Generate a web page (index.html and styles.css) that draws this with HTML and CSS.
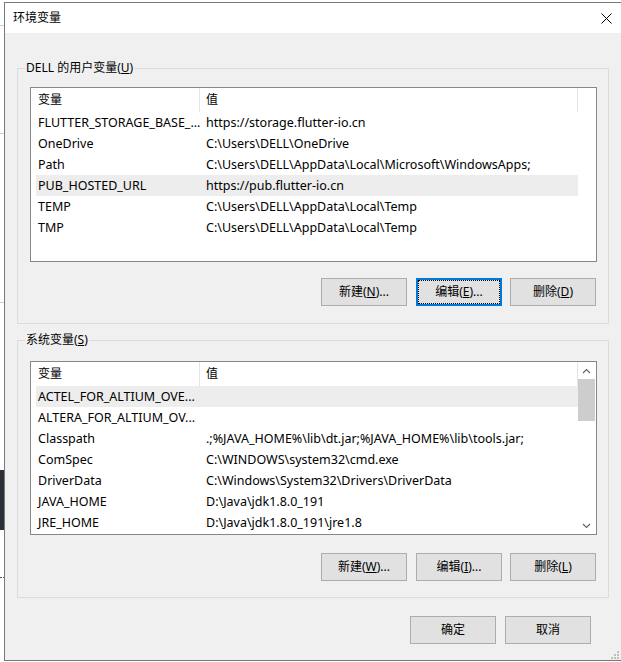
FILE: index.html
```html
<!DOCTYPE html>
<html lang="zh-CN">
<head>
<meta charset="utf-8">
<title>环境变量</title>
<link rel="stylesheet" href="styles.css">
</head>
<body>
<div class="strip">
  <div class="strip-line l1"></div>
  <div class="strip-line l2"></div>
  <div class="strip-line l3"></div>
  <div class="strip-dark"></div>
  <div class="strip-dots"></div>
</div>
<div class="window">
  <div class="titlebar">
    <span class="title">环境变量</span>
    <svg class="close" width="11" height="11" viewBox="0 0 11 11"><path d="M0.5 0.5 L10.5 10.5 M10.5 0.5 L0.5 10.5" stroke="#000" stroke-width="1" fill="none"/></svg>
  </div>
  <div class="body">
    <fieldset class="group group-user">
      <legend>DELL 的用户变量(<u>U</u>)</legend>
      <div class="group-inner">
        <div class="list">
          <div class="list-main">
            <div class="list-head"><div class="h1">变量</div><div class="h2">值</div></div>
            <div class="row"><span class="c1">FLUTTER_STORAGE_BASE_...</span><span class="c2">https://storage.flutter-io.cn</span></div>
            <div class="row"><span class="c1">OneDrive</span><span class="c2">C:\Users\DELL\OneDrive</span></div>
            <div class="row"><span class="c1">Path</span><span class="c2">C:\Users\DELL\AppData\Local\Microsoft\WindowsApps;</span></div>
            <div class="row sel"><span class="c1">PUB_HOSTED_URL</span><span class="c2">https://pub.flutter-io.cn</span></div>
            <div class="row"><span class="c1">TEMP</span><span class="c2">C:\Users\DELL\AppData\Local\Temp</span></div>
            <div class="row"><span class="c1">TMP</span><span class="c2">C:\Users\DELL\AppData\Local\Temp</span></div>
          </div>
        </div>
        <div class="btns btns-user">
          <div class="btn">新建(<u>N</u>)...</div>
          <div class="btn default">编辑(<u>E</u>)...</div>
          <div class="btn">删除(<u>D</u>)</div>
        </div>
      </div>
    </fieldset>
    <fieldset class="group group-sys">
      <legend>系统变量(<u>S</u>)</legend>
      <div class="group-inner">
        <div class="list">
          <div class="list-main">
            <div class="list-head"><div class="h1">变量</div><div class="h2">值</div></div>
            <div class="row sel"><span class="c1">ACTEL_FOR_ALTIUM_OVE...</span><span class="c2"></span></div>
            <div class="row"><span class="c1">ALTERA_FOR_ALTIUM_OV...</span><span class="c2"></span></div>
            <div class="row"><span class="c1">Classpath</span><span class="c2">.;%JAVA_HOME%\lib\dt.jar;%JAVA_HOME%\lib\tools.jar;</span></div>
            <div class="row"><span class="c1">ComSpec</span><span class="c2">C:\WINDOWS\system32\cmd.exe</span></div>
            <div class="row"><span class="c1">DriverData</span><span class="c2">C:\Windows\System32\Drivers\DriverData</span></div>
            <div class="row"><span class="c1">JAVA_HOME</span><span class="c2">D:\Java\jdk1.8.0_191</span></div>
            <div class="row"><span class="c1">JRE_HOME</span><span class="c2">D:\Java\jdk1.8.0_191\jre1.8</span></div>
          </div>
          <div class="scrollbar">
            <div class="arrow"><svg width="9" height="6" viewBox="0 0 9 6"><path d="M1 5 L4.5 1.5 L8 5" stroke="#606060" stroke-width="1.1" fill="none"/></svg></div>
            <div class="thumb"></div>
            <div class="track"></div>
            <div class="arrow"><svg width="9" height="6" viewBox="0 0 9 6"><path d="M1 1 L4.5 4.5 L8 1" stroke="#606060" stroke-width="1.1" fill="none"/></svg></div>
          </div>
        </div>
        <div class="btns btns-sys">
          <div class="btn">新建(<u>W</u>)...</div>
          <div class="btn">编辑(<u>I</u>)...</div>
          <div class="btn">删除(<u>L</u>)</div>
        </div>
      </div>
    </fieldset>
    <div class="footer">
      <div class="btn">确定</div>
      <div class="btn">取消</div>
    </div>
  </div>
  <svg class="grip" width="9" height="9" viewBox="0 0 9 9">
    <rect x="7" y="1" width="2" height="2" fill="#bfbfbf"/>
    <rect x="4" y="4" width="2" height="2" fill="#bfbfbf"/>
    <rect x="7" y="4" width="2" height="2" fill="#bfbfbf"/>
    <rect x="1" y="7" width="2" height="2" fill="#bfbfbf"/>
    <rect x="4" y="7" width="2" height="2" fill="#bfbfbf"/>
    <rect x="7" y="7" width="2" height="2" fill="#bfbfbf"/>
  </svg>
</div>
</body>
</html>
```
FILE: styles.css
```css
* { box-sizing: border-box; }
html, body { margin: 0; padding: 0; }
body {
  width: 621px;
  height: 662px;
  overflow: hidden;
  display: flex;
  background: #ffffff;
  font-family: "Noto Sans", "Noto Sans CJK SC", sans-serif;
  font-size: 12px;
  color: #000;
}

/* strip of the window behind, at the left edge */
.strip { width: 4px; flex: none; display: flex; flex-direction: column; }
.strip-line { height: 1px; background: #cfcfcf; }
.l1 { margin-top: 25px; }
.l2 { margin-top: 107px; }
.l3 { margin-top: 168px; }
.strip-dark { margin-top: 167px; height: 60px; background: #2b2f36; }
.strip-dots { margin-top: 47px; height: 1px; border-top: 1px dotted #555; }

.window {
  flex: 1;
  margin-top: 2px;
  height: 659px;
  border: 1px solid #787878;
  border-right: none;
  background: #f0f0f0;
  display: flex;
  flex-direction: column;
  position: relative;
}
.titlebar {
  height: 30px;
  flex: none;
  background: #fff;
  display: flex;
  align-items: center;
  justify-content: space-between;
  padding: 0 9px 0 8px;
}
.title { line-height: 16px; }
.close { display: block; }

.body { flex: 1; padding: 0 12px; display: flex; flex-direction: column; }

.group {
  margin: 0;
  padding: 0;
  border: 1px solid #dcdcdc;
  min-width: 0;
}
.group legend {
  margin-left: 7px;
  padding: 0 1px;
  line-height: 16px;
  height: 16px;
}
.group-user { margin-top: 27px; }
.group-sys { margin-top: 8px; }
.group-inner { padding: 0 11px 17px 12px; }
.group-sys .group-inner { padding-bottom: 16px; }

.list {
  height: 175px;
  border: 1px solid #828790;
  background: #fff;
  display: flex;
}
.group-user .list { margin-top: 11px; }
.group-sys .list { margin-top: 13px; height: 174px; }

.list-main { width: 547px; flex: none; }
.list-head { display: flex; height: 24px; }
.list-head .h1, .list-head .h2 {
  line-height: 24px;
  border-right: 1px solid #e5e5e5;
}
.h1 { width: 169px; padding-left: 7px; }
.h2 { width: 378px; padding-left: 6px; }

.row {
  display: flex;
  height: 21px;
  line-height: 21px;
  margin-left: 5px;
  width: 542px;
  white-space: nowrap;
  font-size: 12.5px;
}
.row.sel { background: #ededed; }
.c1 { width: 164px; padding-left: 2px; overflow: hidden; }
.c2 { width: 378px; padding-left: 6px; overflow: hidden; }

.scrollbar {
  width: 17px;
  flex: none;
  display: flex;
  flex-direction: column;
  background: #fff;
}
.arrow { height: 17px; display: flex; align-items: center; justify-content: center; }
.arrow svg { display: block; }
.thumb { height: 42px; background: #cdcdcd; }
.track { flex: 1; }

.btns { display: flex; justify-content: flex-end; padding-right: 1px; }
.btns-user { margin-top: 16px; }
.btns-sys { margin-top: 18px; }
.btns .btn + .btn { margin-left: 9px; }
.btns .btn:last-child { margin-left: 8px; }

.btn {
  width: 86px;
  height: 28px;
  border: 1px solid #adadad;
  background: #e1e1e1;
  display: flex;
  align-items: center;
  justify-content: center;
  line-height: 16px;
}
.btn.default {
  border: 2px solid #0078d7;
  outline: 1px dotted #000;
  outline-offset: -3px;
}

.footer {
  display: flex;
  justify-content: flex-end;
  margin-top: 18px;
  padding-right: 18px;
}
.footer .btn + .btn { margin-left: 9px; }

.grip { position: absolute; right: 2px; bottom: 1px; display: block; }
```
